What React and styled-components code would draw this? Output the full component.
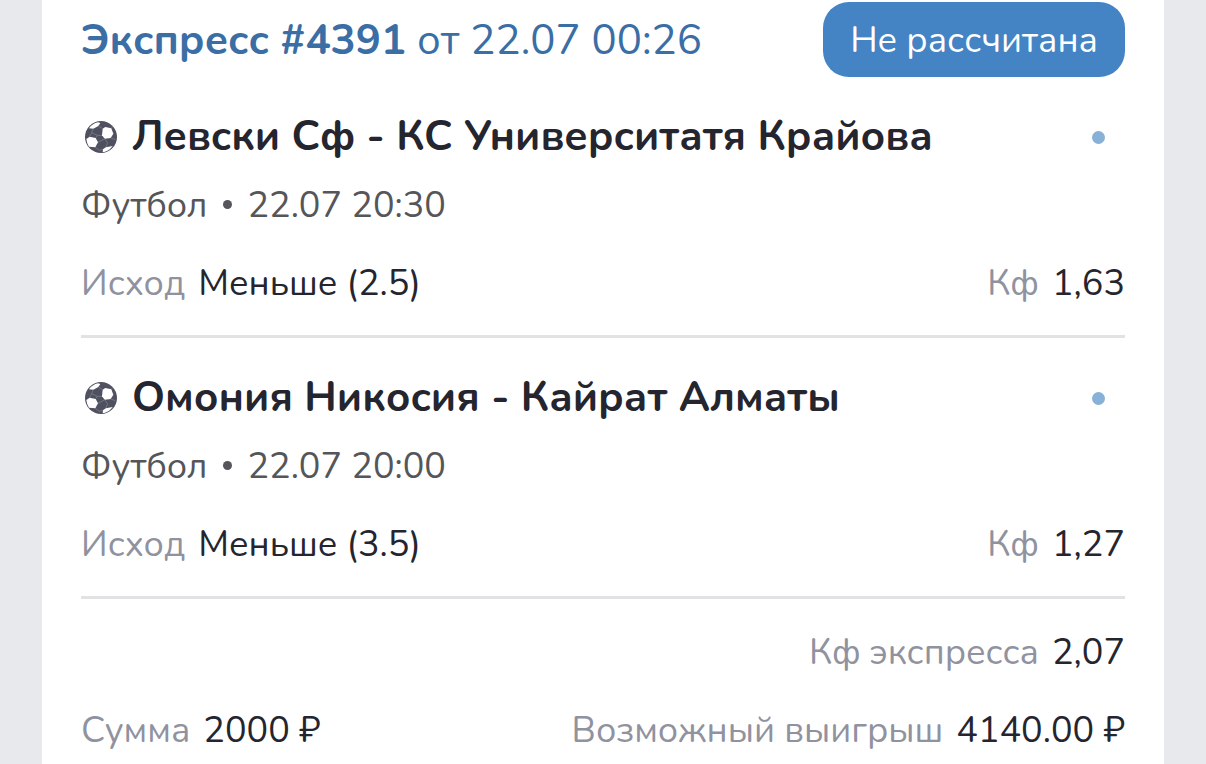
import React from 'react';
import styled, {createGlobalStyle} from 'styled-components';

//Data
const bet = {
    type: 'Экспресс',
    number: '#4391',
    date: '22.07 00:26',
    status: 'Не рассчитана',
    odds: '2,07',
    stake: '2000 ₽',
    payout: '4140.00 ₽',
    events: [
        {
            id: 1,
            name: 'Левски Сф - КС Университатя Крайова',
            sport: 'Футбол',
            start: '22.07 20:30',
            outcome: 'Меньше (2.5)',
            odds: '1,63',
        },
        {
            id: 2,
            name: 'Омония Никосия - Кайрат Алматы',
            sport: 'Футбол',
            start: '22.07 20:00',
            outcome: 'Меньше (3.5)',
            odds: '1,27',
        },
    ],
};

const FootballIcon = () => (
    <Ball viewBox="0 0 96 96" aria-hidden="true">
        <circle cx="48" cy="48" r="48" fill="#4f5160" />
        <g fill="#fff">
            <path d="M12 22 Q22 8 39 4 L46 6 L40 15 L25 23 Z" />
            <path d="M53 23 L61 18 L79 22 L85 38 L77 51 L59 53 L51 43 Z" />
            <path d="M4 54 L14 47 L32 51 L39 64 L31 79 L12 77 Q5 66 4 54 Z" />
            <path d="M54 85 L62 79 L83 75 Q74 88 58 93 L53 93 Z" />
        </g>
        <g fill="none" stroke="#858793" strokeWidth="2">
            <path d="M40 15 L53 23 M25 23 L20 35 L14 47" />
            <path d="M51 43 L37 43 L32 51 M37 43 L20 35" />
            <path d="M59 53 L68 66 L62 79 M39 64 L54 56 L59 53" />
            <path d="M31 79 L43 88 L54 85 M77 51 L91 56 M79 22 L83 16" />
        </g>
    </Ball>
);

const Event = ({event}) => (
    <EventItem>
        <EventTitle>
            <FootballIcon />
            <h3>{event.name}</h3>
            <Dot />
        </EventTitle>
        <EventInfo>
            <span>{event.sport}</span>
            <Bullet />
            <time>{event.start}</time>
        </EventInfo>
        <Line>
            <Pair label="Исход" value={event.outcome} />
            <Pair label="Кф" value={event.odds} />
        </Line>
    </EventItem>
);

const Pair = ({label, value}) => (
    <PairBox>
        <dt>{label}</dt>
        <dd>{value}</dd>
    </PairBox>
);

const App = () => (
    <>
        <GlobalStyle />
        <Card>
            <Header>
                <BetTitle>
                    <strong>{bet.type} {bet.number}</strong> от {bet.date}
                </BetTitle>
                <Status>{bet.status}</Status>
            </Header>
            <EventList>
                {bet.events.map((event) => (
                    <Event key={event.id} event={event} />
                ))}
            </EventList>
            <Summary>
                <Line $end>
                    <Pair label="Кф экспресса" value={bet.odds} />
                </Line>
                <Line>
                    <Pair label="Сумма" value={bet.stake} />
                    <Pair label="Возможный выигрыш" value={bet.payout} />
                </Line>
            </Summary>
        </Card>
    </>
);

const GlobalStyle = createGlobalStyle`
    *{
        box-sizing: border-box;
        margin: 0;
        padding: 0;
    }
    body{
        background: #e8e9ed;
        font-family: Nunito, "Open Sans", "Noto Sans", sans-serif;
        font-size: 36px;
        line-height: 48px;
        color: #24252e;
    }
`

const Card = styled.main`
    margin: 0 42px;
    padding: 2px 39px 9px;
    background: white;
`

const Header = styled.header`
    display: flex;
    align-items: center;
    justify-content: space-between;
`

const BetTitle = styled.h2`
    padding-top: 2px;
    font-size: 42px;
    line-height: 56px;
    font-weight: 400;
    color: #3a6ea5;
    white-space: nowrap;
    strong{
        font-weight: 700;
    }
`

const Status = styled.span`
    padding: 15px 27px 12px;
    border-radius: 26px;
    background: #4483c4;
    color: white;
    white-space: nowrap;
`

const EventList = styled.ul`
    list-style: none;
`

const EventItem = styled.li`
    padding: 32px 0 27px;
    border-bottom: 3px solid #e2e2e4;
`

const EventTitle = styled.div`
    display: flex;
    align-items: center;
    padding: 0 20px 0 4px;
    h3{
        flex: 1;
        margin-left: 15px;
        font-size: 42px;
        line-height: 56px;
        font-weight: 700;
        white-space: nowrap;
    }
`

const Ball = styled.svg`
    flex: none;
    width: 32px;
    height: 32px;
`

const Dot = styled.span`
    width: 13px;
    height: 13px;
    border-radius: 50%;
    background: #87b1d6;
`

const EventInfo = styled.div`
    display: flex;
    align-items: center;
    margin: 17px 0 30px;
    color: #55565a;
`

const Bullet = styled.span`
    width: 9px;
    height: 9px;
    margin: 0 15px 4px 16px;
    border-radius: 50%;
    background: #55565a;
`

const Line = styled.dl`
    display: flex;
    justify-content: ${(props) => (props.$end ? 'flex-end' : 'space-between')};
`

const PairBox = styled.div`
    display: flex;
    gap: 13px;
    white-space: nowrap;
    dt{
        color: #9092a0;
    }
`

const Summary = styled.section`
    display: grid;
    gap: 30px;
    padding-top: 30px;
`

export default App;
